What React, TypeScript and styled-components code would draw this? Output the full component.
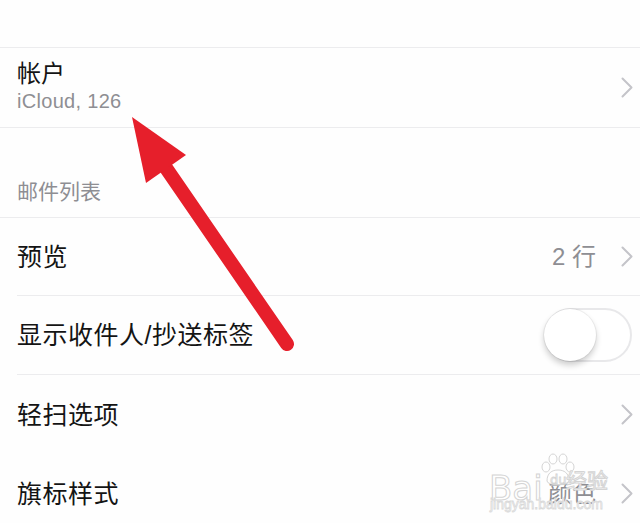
import React from 'react';
import styled, { createGlobalStyle } from 'styled-components';

const GlobalStyle = createGlobalStyle`
  html, body {
    margin: 0;
    padding: 0;
    background: #fefefe;
  }
  body {
    font-family: "Liberation Sans", "Noto Sans CJK SC", sans-serif;
    -webkit-font-smoothing: antialiased;
  }
`;

const Page = styled.div`
  position: relative;
  width: 640px;
  height: 523px;
  overflow: hidden;
  background: #fefefe;
  color: #111;
`;

const TopGap = styled.div`
  height: 48px;
  box-sizing: border-box;
  border-bottom: 1px solid #ececee;
`;

const AccountCell = styled.div`
  height: 80px;
  box-sizing: border-box;
  border-bottom: 1px solid #ececee;
  display: flex;
  align-items: center;
  padding: 0 7px 0 17px;
`;

const Stack = styled.div`
  flex: 1;
  display: flex;
  flex-direction: column;
  gap: 2px;
  padding-bottom: 1px;
`;

const Title = styled.div`
  font-size: 24px;
  line-height: 26px;
  color: #141414;
`;

const Subtitle = styled.div`
  font-size: 20px;
  line-height: 24px;
  color: #8e8e93;
  letter-spacing: 0.3px;
`;

const SectionHeader = styled.div`
  height: 90px;
  box-sizing: border-box;
  border-bottom: 1px solid #ececee;
  display: flex;
  align-items: flex-end;
  padding: 0 0 13px 17px;
  font-size: 21px;
  line-height: 24px;
  color: #8e8e93;
`;

const Row = styled.div<{ $h: number }>`
  height: ${p => p.$h}px;
  padding-left: 17px;
  display: flex;
`;

const RowInner = styled.div<{ $line?: boolean }>`
  flex: 1;
  display: flex;
  align-items: center;
  box-sizing: border-box;
  padding-right: 7px;
  border-bottom: ${p => (p.$line ? '1px solid #ececee' : 'none')};
`;

const Label = styled.div`
  flex: 1;
  font-size: 25px;
  line-height: 28px;
  letter-spacing: 0.5px;
  color: #141414;
`;

const Value = styled.div`
  font-size: 24px;
  line-height: 28px;
  color: #8e8e93;
  margin-right: 25px;
`;

const Track = styled.div`
  width: 88px;
  height: 54px;
  box-sizing: border-box;
  border: 2px solid #e8e8ea;
  border-radius: 27px;
  background: #fff;
  display: flex;
  align-items: center;
  margin-right: 1px;
`;

const Knob = styled.div`
  width: 52px;
  height: 52px;
  margin-left: -2px;
  border-radius: 50%;
  background: #fff;
  box-shadow: 0 4px 6px rgba(0, 0, 0, 0.2), 0 0 0 1px rgba(0, 0, 0, 0.05);
`;

const Overlay = styled.svg`
  position: absolute;
  left: 0;
  top: 0;
  pointer-events: none;
`;

const Watermark = styled.div`
  position: absolute;
  left: 488px;
  top: 453px;
  width: 122px;
  height: 60px;
  pointer-events: none;
`;

const WmBai = styled.span`
  position: absolute;
  left: 1px;
  top: 20px;
  font-family: "DejaVu Sans", sans-serif;
  font-size: 34px;
  line-height: 30px;
  color: #fff;
  -webkit-text-stroke: 1px #d4d4d4;
`;

const WmJy = styled.span`
  position: absolute;
  left: 78px;
  top: 14px;
  font-family: "Noto Sans CJK SC", sans-serif;
  font-size: 21px;
  line-height: 24px;
  color: #fff;
  -webkit-text-stroke: 1px #d4d4d4;
`;

const WmUrl = styled.span`
  position: absolute;
  left: 2px;
  top: 44px;
  font-family: "Liberation Sans", sans-serif;
  font-size: 14px;
  line-height: 14px;
  color: #fff;
  -webkit-text-stroke: 0.8px #d9d9d9;
`;

const Chevron = () => (
  <svg width="12" height="21" viewBox="0 0 12 21">
    <path d="M1.5 1.5 L10.5 10.5 L1.5 19.5" fill="none" stroke="#c4c4c9" strokeWidth="2" strokeLinecap="round" strokeLinejoin="round" />
  </svg>
);

const Paw = () => (
  <svg width="40" height="34" viewBox="0 0 40 34" style={{ position: 'absolute', left: 50, top: 0 }}>
    <g fill="#fff" stroke="#d4d4d4" strokeWidth="1">
      <ellipse cx="8" cy="14" rx="4" ry="5" />
      <ellipse cx="15" cy="6" rx="4" ry="5" />
      <ellipse cx="25" cy="6" rx="4" ry="5" />
      <ellipse cx="32" cy="14" rx="4" ry="5" />
      <path d="M9 28 C9 20 14 17 20 17 C26 17 31 20 31 28 C31 33 9 33 9 28 Z" />
    </g>
    <text x="12" y="31" fontSize="13" fontFamily="DejaVu Sans, sans-serif" fill="#fff" stroke="#d4d4d4" strokeWidth="0.8">du</text>
  </svg>
);

export default function App() {
  return (
    <Page>
      <GlobalStyle />
      <TopGap />
      <AccountCell>
        <Stack>
          <Title>帐户</Title>
          <Subtitle>iCloud, 126</Subtitle>
        </Stack>
        <Chevron />
      </AccountCell>
      <SectionHeader>邮件列表</SectionHeader>
      <Row $h={78}>
        <RowInner $line>
          <Label>预览</Label>
          <Value>2 行</Value>
          <Chevron />
        </RowInner>
      </Row>
      <Row $h={79}>
        <RowInner $line>
          <Label>显示收件人/抄送标签</Label>
          <Track>
            <Knob />
          </Track>
        </RowInner>
      </Row>
      <Row $h={79}>
        <RowInner>
          <Label>轻扫选项</Label>
          <Chevron />
        </RowInner>
      </Row>
      <Row $h={79}>
        <RowInner>
          <Label>旗标样式</Label>
          <Value>颜色</Value>
          <Chevron />
        </RowInner>
      </Row>

      <Watermark>
        <Paw />
        <WmBai>Bai</WmBai>
        <WmJy>经验</WmJy>
        <WmUrl>jingyan.baidu.com</WmUrl>
      </Watermark>

      <Overlay width="640" height="523" viewBox="0 0 640 523">
        <line x1="166" y1="168" x2="287" y2="344" stroke="#e61f2b" strokeWidth="14" strokeLinecap="round" />
        <polygon points="132,117 186,155 146,183" fill="#e61f2b" />
      </Overlay>
    </Page>
  );
}
